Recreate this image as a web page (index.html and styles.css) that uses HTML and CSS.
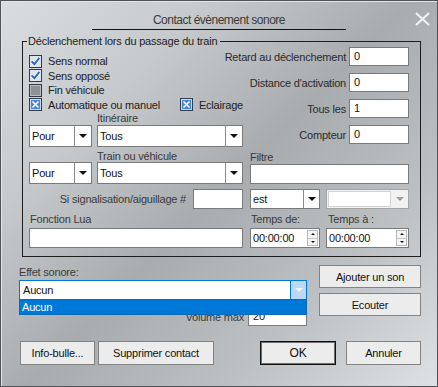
FILE: index.html
```html
<!DOCTYPE html>
<html lang="fr">
<head>
    <meta charset="UTF-8">
    <title>Contact évènement sonore</title>
    <link rel="stylesheet" href="styles.css">
</head>
<body>
    <div class="dialog">
        <div class="titlebar">
            <div class="title">Contact évènement sonore</div>
            <svg class="close" width="15" height="14" viewBox="0 0 15 14">
                <path d="M1 1L14 13M14 1L1 13" stroke="#f2f3f4" stroke-width="2" fill="none"/>
            </svg>
        </div>

        <fieldset class="trigger">
            <legend>Déclenchement lors du passage du train</legend>

            <div class="top">
                <div class="checks">
                    <div class="check">
                        <svg class="box" width="13" height="13" viewBox="0 0 13 13">
                            <rect x="0.5" y="0.5" width="12" height="12" fill="#dde4ec" stroke="#343a40"/>
                            <path d="M2.6 6.4l2.8 2.9 4.9-6.4" fill="none" stroke="#fff" stroke-width="3.4"/>
                            <path d="M2.6 6.4l2.8 2.9 4.9-6.4" fill="none" stroke="#2a66c4" stroke-width="2"/>
                        </svg>
                        <span>Sens normal</span>
                    </div>
                    <div class="check">
                        <svg class="box" width="13" height="13" viewBox="0 0 13 13">
                            <rect x="0.5" y="0.5" width="12" height="12" fill="#dde4ec" stroke="#343a40"/>
                            <path d="M2.6 6.4l2.8 2.9 4.9-6.4" fill="none" stroke="#fff" stroke-width="3.4"/>
                            <path d="M2.6 6.4l2.8 2.9 4.9-6.4" fill="none" stroke="#2a66c4" stroke-width="2"/>
                        </svg>
                        <span>Sens opposé</span>
                    </div>
                    <div class="check">
                        <svg class="box" width="13" height="13" viewBox="0 0 13 13">
                            <rect x="0.5" y="0.5" width="12" height="12" fill="#8e9194" stroke="#343a40"/>
                            <rect x="1.5" y="1.5" width="10" height="10" fill="none" stroke="#b9bcbe"/>
                        </svg>
                        <span>Fin véhicule</span>
                    </div>
                    <div class="check-row">
                        <div class="check wide">
                            <svg class="box" width="13" height="13" viewBox="0 0 13 13">
                                <rect x="0.5" y="0.5" width="12" height="12" fill="#4a84d6" stroke="#2f3e52"/>
                                <rect x="1.5" y="1.5" width="10" height="10" fill="none" stroke="#c9dcf3"/>
                                <path d="M3.5 3.5l6 6M9.5 3.5l-6 6" stroke="#fff" stroke-width="1.6" fill="none"/>
                            </svg>
                            <span>Automatique ou manuel</span>
                        </div>
                        <div class="check">
                            <svg class="box" width="13" height="13" viewBox="0 0 13 13">
                                <rect x="0.5" y="0.5" width="12" height="12" fill="#4a84d6" stroke="#2f3e52"/>
                                <rect x="1.5" y="1.5" width="10" height="10" fill="none" stroke="#c9dcf3"/>
                                <path d="M3.5 3.5l6 6M9.5 3.5l-6 6" stroke="#fff" stroke-width="1.6" fill="none"/>
                            </svg>
                            <span>Eclairage</span>
                        </div>
                    </div>
                    <div class="caption indent">Itinéraire</div>
                    <div class="pair">
                        <div class="combo small"><span class="value">Pour</span><span class="drop"><i class="arrow"></i></span></div>
                        <div class="combo grow"><span class="value">Tous</span><span class="drop"><i class="arrow"></i></span></div>
                    </div>
                </div>

                <div class="fields">
                    <div class="field"><span>Retard au déclenchement</span><div class="input num">0</div></div>
                    <div class="field"><span>Distance d'activation</span><div class="input num">0</div></div>
                    <div class="field"><span>Tous les</span><div class="input num">1</div></div>
                    <div class="field"><span>Compteur</span><div class="input num">0</div></div>
                </div>
            </div>

            <div class="lower">
                <div class="caption indent">Train ou véhicule</div>
                <div class="caption">Filtre</div>

                <div class="pair">
                    <div class="combo small"><span class="value">Pour</span><span class="drop"><i class="arrow"></i></span></div>
                    <div class="combo grow"><span class="value">Tous</span><span class="drop"><i class="arrow"></i></span></div>
                </div>
                <div class="input filter"></div>

                <div class="signal">
                    <span>Si signalisation/aiguillage #</span>
                    <div class="input sig"></div>
                </div>
                <div class="split row-c">
                    <div class="combo short"><span class="value">est</span><span class="drop"><i class="arrow"></i></span></div>
                    <div class="combo disabled"><span class="value"><span class="inner"></span></span><span class="drop"><i class="arrow"></i></span></div>
                </div>

                <div class="caption lua">Fonction Lua</div>
                <div class="split">
                    <div class="caption t1">Temps de:</div>
                    <div class="caption t2">Temps à :</div>
                </div>

                <div class="input lua-input"></div>
                <div class="split">
                    <div class="input time"><span>00:00:00</span><span class="spin"><i class="up"></i><i class="down"></i></span></div>
                    <div class="input time"><span>00:00:00</span><span class="spin"><i class="up"></i><i class="down"></i></span></div>
                </div>
            </div>
        </fieldset>

        <div class="sound">
            <div class="sound-left">
                <div class="sound-label">Effet sonore:</div>
                <div class="combo open">
                    <span class="value">Aucun</span><span class="drop"><i class="arrow"></i></span>
                    <div class="droplist"><div class="item">Aucun</div></div>
                </div>
                <div class="volume">
                    <span>Volume max</span>
                    <div class="input vol">20</div>
                </div>
            </div>
            <div class="sound-buttons">
                <button class="push">Ajouter un son</button>
                <button class="push">Ecouter</button>
            </div>
        </div>

        <div class="actions">
            <button class="push info">Info-bulle...</button>
            <button class="push remove">Supprimer contact</button>
            <button class="push ok">OK</button>
            <button class="push cancel">Annuler</button>
        </div>
    </div>
</body>
</html>
```

FILE: styles.css
```css
* { box-sizing: border-box; }
body {
    margin: 0;
    font-family: "Liberation Sans", Arial, sans-serif;
    font-size: 11px;
    letter-spacing: -0.2px;
    color: #222;
}
.dialog {
    width: 438px;
    height: 387px;
    border: 1px solid #505457;
    box-shadow: inset 1px 1px 0 #e2e5e7;
    background: linear-gradient(135deg, #dadddf 0%, #c7cacc 25%, #a9acae 50%, #bec1c3 75%, #dee1e3 100%);
}

/* title */
.titlebar {
    display: grid;
    grid-template-columns: 1fr 254px 1fr;
    padding-top: 11px;
}
.title {
    grid-column: 2;
    margin-top: 1px;
    padding-bottom: 2px;
    border-bottom: 1px solid #141414;
    text-align: center;
    font-size: 12px;
    line-height: 14px;
    letter-spacing: -0.5px;
    color: #3a3a3a;
}
.close { grid-column: 3; justify-self: end; margin-right: 7px; }

/* group box */
.trigger {
    width: 399px;
    margin: 6px 0 0 21px;
    padding: 0 11px 8px 6px;
    border: 1px solid #1d1d1d;
    min-width: 0;
}
.trigger legend {
    padding: 0 3px 0 1px;
    margin-left: -2px;
    line-height: 11px;
}
.top { display: grid; }
.top > * { grid-area: 1 / 1; }
.checks { justify-self: start; width: 214px; padding-top: 7px; }
.check { display: flex; align-items: center; gap: 6px; height: 14.5px; }
.check-row { display: flex; }
.check.wide { width: 161px; }
.caption { line-height: 13px; color: #3a3a3a; }
.caption.indent { padding-left: 68px; }
.pair { display: flex; gap: 5px; }

.fields { justify-self: end; display: flex; flex-direction: column; gap: 7px; }
.field { display: flex; justify-content: flex-end; align-items: center; gap: 3px; height: 19px; color: #2a2a2a; }

/* inputs */
.input {
    background: #fff;
    border: 1px solid #7a7a7a;
    height: 20px;
    line-height: 18px;
    padding: 0 4px;
    color: #111;
}
.input.num { width: 60px; height: 19px; line-height: 17px; }
.combo {
    display: flex;
    height: 22px;
    background: #fff;
    border: 1px solid #7a7a7a;
    color: #111;
}
.combo .value { flex: 1; padding-left: 2px; line-height: 20px; }
.combo .drop {
    width: 17px;
    border-left: 1px solid #8a8a8a;
    display: flex;
    align-items: center;
    justify-content: center;
}
.arrow {
    width: 0;
    height: 0;
    border-left: 4px solid transparent;
    border-right: 4px solid transparent;
    border-top: 4px solid #111;
}
.combo.small { width: 63px; }
.combo.grow { flex: 1; }

/* lower part of the group */
.lower {
    display: grid;
    grid-template-columns: 214px 159px;
    grid-template-rows: 15px 22px 25px 19px 20px;
    column-gap: 7px;
}
.lower .caption { margin-top: 4px; }
.lower .caption.indent { margin-top: 3px; }
.input.filter { align-self: end; }
.signal { display: flex; justify-content: flex-end; align-items: center; gap: 7px; align-self: end; height: 20px; color: #3a3a3a; }
.input.sig { width: 50px; }
.split { display: grid; grid-template-columns: 70px 83px; column-gap: 6px; }
.row-c { align-self: end; }
.combo.short, .combo.disabled { height: 20px; }
.combo.short .value, .combo.disabled .value { line-height: 18px; }
.combo.short .drop { width: 16px; }
.combo.disabled { border-color: #a5a5a5; background: #f2f2f2; }
.combo.disabled .value { padding: 1px 0 1px 1px; }
.combo.disabled .inner { display: block; height: 100%; background: #fff; border: 1px solid #d2d2d2; }
.combo.disabled .drop { border-left: 0; }
.combo.disabled .arrow { border-top-color: #9a9a9a; }
.caption.lua { padding-left: 1px; }
.split .caption.t1 { padding-left: 1px; }
.split .caption.t2 { padding-left: 2px; }
.input.time { display: flex; align-items: center; justify-content: space-between; padding: 0 1px 0 2px; }
.spin {
    display: flex;
    flex-direction: column;
    width: 11px;
    height: 16px;
    border: 1px solid #b9b9b9;
    background: #f4f4f4;
}
.spin i { flex: 1; display: flex; align-items: center; justify-content: center; }
.spin i + i { border-top: 1px solid #c6c6c6; }
.spin .up::before, .spin .down::before {
    content: "";
    border-left: 2px solid transparent;
    border-right: 2px solid transparent;
}
.spin .up::before { border-bottom: 2px solid #111; }
.spin .down::before { border-top: 2px solid #111; }

/* sound */
.sound { display: flex; gap: 12px; margin: 8px 0 0 18px; }
.sound-left { width: 288px; }
.sound-label { margin-top: 1px; line-height: 13px; color: #3a3a3a; }
.combo.open {
    position: relative;
    margin-top: 1px;
    height: 20px;
    border-color: #0078d7;
}
.combo.open .value { padding-left: 3px; line-height: 18px; }
.combo.open .drop { width: 16px; background: #bcd8f2; border-left: 1px solid #0078d7; }
.combo.open .arrow { border-top-color: #eef3f8; }
.droplist {
    position: absolute;
    left: -1px;
    right: -1px;
    top: 100%;
    height: 16px;
    border: 1px solid #0a68b5;
    background: #0078d7;
    color: #fff;
}
.droplist .item { padding-left: 2px; line-height: 14px; }
.volume { display: flex; justify-content: flex-end; align-items: center; gap: 4px; margin-top: 7px; color: #3a3a3a; }
.input.vol { width: 59px; height: 19px; line-height: 17px; }
.sound-buttons { display: flex; flex-direction: column; gap: 5px; width: 102px; }

.push {
    height: 23px;
    padding: 0;
    font: inherit;
    letter-spacing: -0.2px;
    color: #111;
    background: #ececec;
    border: 1px solid #838383;
}

/* bottom buttons */
.actions { display: flex; gap: 3px; margin: 15px 16px 0 19px; }
.actions .push { height: 24px; }
.push.info { width: 75px; }
.push.remove { width: 116px; }
.push.ok { width: 76px; margin-left: auto; border-color: #111; box-shadow: inset 0 0 0 1px #6e6e6e; font-size: 12px; }
.push.cancel { width: 75px; margin-left: 7px; }
```
